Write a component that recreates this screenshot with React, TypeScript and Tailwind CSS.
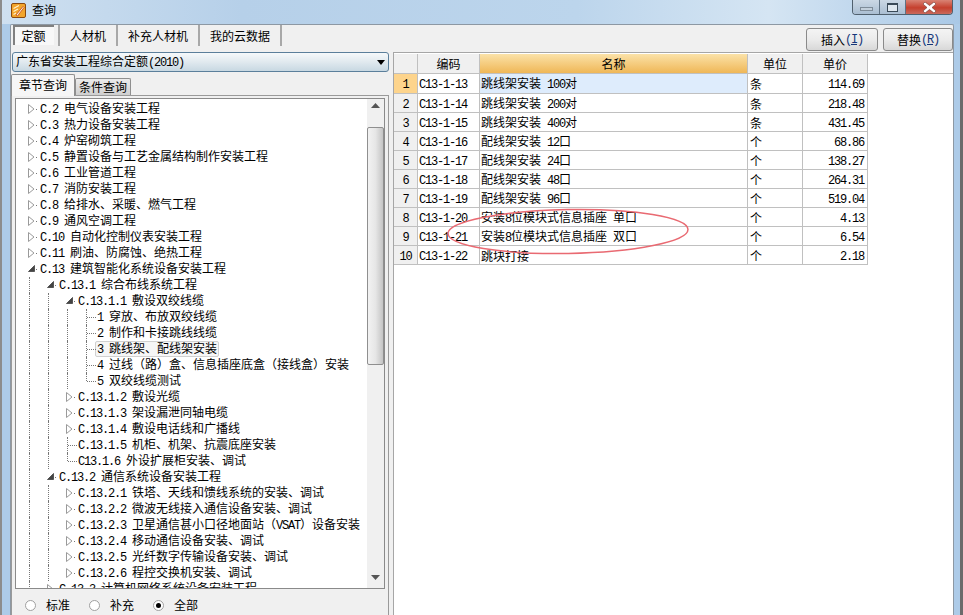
import { Fragment } from "react";

const latinClass = "font-['Liberation_Mono',monospace] text-[12px] tracking-[-1.2px]";

// Latin and digits sit on a 6px grid, CJK on a 12px grid
const Txt = ({ children }: { children: string }) => (
  <span className="whitespace-pre font-['Noto_Sans_CJK_SC',sans-serif] text-[12px] leading-4">
    {children.split(/([\x20-\x7e]+)/).map((part, i) =>
      /^[\x20-\x7e]+$/.test(part) ? (
        <span key={i} className={latinClass}>{part}</span>
      ) : (
        <Fragment key={i}>{part}</Fragment>
      )
    )}
  </span>
);

type TreeRow = {
  level: number;
  node?: "closed" | "open";
  line?: "full" | "half";
  text: string;
  selected?: boolean;
};

const treeRows: TreeRow[] = [
  { level: 0, node: "closed", text: "C.2 电气设备安装工程" },
  { level: 0, node: "closed", text: "C.3 热力设备安装工程" },
  { level: 0, node: "closed", text: "C.4 炉窑砌筑工程" },
  { level: 0, node: "closed", text: "C.5 静置设备与工艺金属结构制作安装工程" },
  { level: 0, node: "closed", text: "C.6 工业管道工程" },
  { level: 0, node: "closed", text: "C.7 消防安装工程" },
  { level: 0, node: "closed", text: "C.8 给排水、采暖、燃气工程" },
  { level: 0, node: "closed", text: "C.9 通风空调工程" },
  { level: 0, node: "closed", text: "C.10 自动化控制仪表安装工程" },
  { level: 0, node: "closed", text: "C.11 刷油、防腐蚀、绝热工程" },
  { level: 0, node: "open", text: "C.13 建筑智能化系统设备安装工程" },
  { level: 1, node: "open", text: "C.13.1 综合布线系统工程" },
  { level: 2, node: "open", text: "C.13.1.1 敷设双绞线缆" },
  { level: 3, line: "full", text: "1 穿放、布放双绞线缆" },
  { level: 3, line: "full", text: "2 制作和卡接跳线线缆" },
  { level: 3, line: "full", text: "3 跳线架、配线架安装", selected: true },
  { level: 3, line: "full", text: "4 过线（路）盒、信息插座底盒（接线盒）安装" },
  { level: 3, line: "half", text: "5 双绞线缆测试" },
  { level: 2, node: "closed", text: "C.13.1.2 敷设光缆" },
  { level: 2, node: "closed", text: "C.13.1.3 架设漏泄同轴电缆" },
  { level: 2, node: "closed", text: "C.13.1.4 敷设电话线和广播线" },
  { level: 2, line: "full", text: "C.13.1.5 机柜、机架、抗震底座安装" },
  { level: 2, line: "half", text: "C13.1.6 外设扩展柜安装、调试" },
  { level: 1, node: "open", text: "C.13.2 通信系统设备安装工程" },
  { level: 2, node: "closed", text: "C.13.2.1 铁塔、天线和馈线系统的安装、调试" },
  { level: 2, node: "closed", text: "C.13.2.2 微波无线接入通信设备安装、调试" },
  { level: 2, node: "closed", text: "C.13.2.3 卫星通信甚小口径地面站（VSAT）设备安装" },
  { level: 2, node: "closed", text: "C.13.2.4 移动通信设备安装、调试" },
  { level: 2, node: "closed", text: "C.13.2.5 光纤数字传输设备安装、调试" },
  { level: 2, node: "closed", text: "C.13.2.6 程控交换机安装、调试" },
  { level: 1, node: "closed", text: "C.13.3 计算机网络系统设备安装工程" },
];

const tableRows = [
  ["C13-1-13", "跳线架安装 100对", "条", "114.69"],
  ["C13-1-14", "跳线架安装 200对", "条", "218.48"],
  ["C13-1-15", "跳线架安装 400对", "条", "431.45"],
  ["C13-1-16", "配线架安装 12口", "个", "68.86"],
  ["C13-1-17", "配线架安装 24口", "个", "138.27"],
  ["C13-1-18", "配线架安装 48口", "个", "264.31"],
  ["C13-1-19", "配线架安装 96口", "个", "519.04"],
  ["C13-1-20", "安装8位模块式信息插座 单口", "个", "4.13"],
  ["C13-1-21", "安装8位模块式信息插座 双口", "个", "6.54"],
  ["C13-1-22", "跳块打接", "个", "2.18"],
];

const Guide = () => (
  <div className="h-full w-[19px] shrink-0 pl-[9px]">
    <div className="h-full border-l border-dotted border-[#777]" />
  </div>
);

const NodeCell = ({ row }: { row: TreeRow }) => (
  <div className="relative h-full w-5 shrink-0">
    {row.line && (
      <>
        <div className={`absolute left-[9px] top-0 border-l border-dotted border-[#777] ${row.line === "half" ? "h-2" : "h-full"}`} />
        <div className="absolute left-[10px] top-2 w-[9px] border-t border-dotted border-[#777]" />
      </>
    )}
    {row.node === "closed" && (
      <>
        <svg width="7" height="10" viewBox="0 0 7 10" className="absolute left-2 top-[3px]">
          <path d="M.5.5v9L6 5z" fill="#fff" stroke="#9a9a9a" />
        </svg>
        <div className="absolute left-4 top-2 h-px w-px bg-[#777]" />
      </>
    )}
    {row.node === "open" && (
      <>
        <svg width="7" height="7" viewBox="0 0 7 7" className="absolute left-2 top-1">
          <path d="M6.5.5v6H.5z" fill="#444" stroke="#555" />
        </svg>
        <div className="absolute left-4 top-2 h-px w-px bg-[#777]" />
      </>
    )}
  </div>
);

const Tree = () => (
  <div className="h-full min-w-0 flex-1 overflow-hidden bg-white pl-1 pt-[2px]">
    {treeRows.map((row, i) => (
      <div key={i} className="flex h-4 items-center text-black">
        {Array.from({ length: row.level }).map((_, g) => (
          <Guide key={g} />
        ))}
        <NodeCell row={row} />
        {row.selected ? (
          <div className="-ml-[2px] flex h-[16px] items-center rounded-[2px] border border-[#d0d0d0] bg-[#f6f6f6] pl-px pr-px">
            <Txt>{row.text}</Txt>
          </div>
        ) : (
          <Txt>{row.text}</Txt>
        )}
      </div>
    ))}
  </div>
);

const Scrollbar = () => (
  <div className="flex h-full w-[17px] shrink-0 flex-col bg-[#f0f0f0]">
    <div className="flex h-[28px] shrink-0 justify-center pt-1">
      <svg width="9" height="6" viewBox="0 0 9 6"><path d="M4.5 0 9 5H0z" fill="#555" /></svg>
    </div>
    <div className="h-[238px] shrink-0 rounded-[2px] border border-[#8f8f8f] bg-[linear-gradient(to_right,#f2f2f2,#e6e6e6_50%,#c4c4c4)]" />
    <div className="flex-1" />
    <div className="flex h-[17px] shrink-0 justify-center pt-1">
      <svg width="9" height="6" viewBox="0 0 9 6"><path d="M0 0h9L4.5 5z" fill="#555" /></svg>
    </div>
  </div>
);

const Radio = ({ label, on }: { label: string; on?: boolean }) => (
  <div className="flex w-[64px] items-center gap-[10px]">
    <div className="flex size-[11px] items-center justify-center rounded-full border border-[#a0a0a0] bg-white">
      {on && <div className="size-[5px] rounded-full bg-black" />}
    </div>
    <Txt>{label}</Txt>
  </div>
);

const Btn = ({ label, key2, w }: { label: string; key2: string; w: string }) => (
  <div className={`flex h-[23px] items-center justify-center rounded-[3px] border border-[#8a8a8a] bg-[linear-gradient(to_bottom,#f4f4f4,#ebebeb_50%,#d8d8d8)] text-black ${w}`}>
    <Txt>{label}</Txt>
    <span className="font-['Liberation_Mono',monospace] text-[12px] tracking-[-1.2px] text-[#16367a]">
      (<span className="underline">{key2}</span>)
    </span>
  </div>
);

const Tab = ({ label, w }: { label: string; w: string }) => (
  <div className={`flex h-[21px] items-center justify-center border-r-2 border-[#a8a8a8] text-black ${w}`}>
    <Txt>{label}</Txt>
  </div>
);

const headCell = "flex h-full items-center justify-center border-r border-[#c0c0c0] shrink-0";

const App = () => {
  return (
    <div className="flex h-[615px] w-[963px] flex-col overflow-hidden border-l-2 border-r-[3px] border-l-[#8c8c8c] border-r-[#6b6b6b] bg-[#adcbe8] text-black">
      {/* Title bar */}
      <div className="flex h-6 shrink-0 items-start bg-[linear-gradient(to_right,#cfe0f0,#b6d0e9_25%,#bcd5ec_60%,#d5e5f3_80%,#a9c8e6)]">
        <svg width="15" height="15" viewBox="0 0 15 15" className="ml-[9px] mt-[3px]">
          <rect x=".5" y=".5" width="14" height="14" rx="1.5" fill="#f2a52c" stroke="#8a4a10" />
          <path d="M2.500 5.500 8 2.500M2.500 8.500 7 6M2.500 11.500 5 10" stroke="#fff3d0" strokeWidth="1.200" />
          <path d="M5 12 12 3.500l1 1L6.500 13z" fill="#fff6d8" stroke="#c5471b" strokeWidth=".8" />
        </svg>
        <div className="ml-[6px] mt-px leading-4">
          <Txt>查询</Txt>
        </div>
        <div className="ml-auto mr-[7px] flex h-[15px] overflow-hidden rounded-b-[4px] border border-t-0 border-[#50606e]">
          <div className="flex w-[27px] items-end justify-center border-r border-[#5f7284] bg-[linear-gradient(to_bottom,#cbd8e5,#aabed2)] pb-[3px]">
            <div className="h-[4px] w-[13px] border border-[#7e8c99] bg-[#c3d0dc]" />
          </div>
          <div className="flex w-[26px] items-center justify-center border-r border-[#5f7284] bg-[linear-gradient(to_bottom,#cbd8e5,#aabed2)]">
            <div className="h-[9px] w-[11px] border border-t-2 border-[#3a4a58] bg-[#dfe8f0]" />
          </div>
          <div className="flex w-[46px] items-center justify-center bg-[linear-gradient(to_bottom,#d98374,#c5402e_55%,#c9695c)]">
            <svg width="13" height="11" viewBox="0 0 13 11"><path d="M2 0l4.500 3.500L11 0l2 2-4 3.500 4 3.500-2 2-4.500-3.500L2 11 0 9l4-3.500L0 2z" fill="#fff" stroke="#6b3a34" strokeWidth=".6" /></svg>
          </div>
        </div>
      </div>

      {/* Window body */}
      <div className="ml-2 mr-[6px] flex min-h-0 flex-1 flex-col rounded-t-[2px] border border-b-0 border-[#8d98a3] bg-[#f0f0f0]">
        {/* Tabs and action buttons */}
        <div className="flex h-[27px] shrink-0 pl-[2px]">
          <div className="flex h-[21px]">
            <div className="flex w-[47px] border-r-2 border-[#a8a8a8]">
              <div className="flex h-[20px] w-[41px] items-center justify-center border-l-2 border-t-2 border-[#808080] bg-[#f8f8f8] pr-[2px]">
                <Txt>定额</Txt>
              </div>
            </div>
            <Tab label="人材机" w="w-[58px]" />
            <Tab label="补充人材机" w="w-[82px]" />
            <Tab label="我的云数据" w="w-[82px]" />
          </div>
          <div className="ml-auto flex gap-[5px] pt-[3px]">
            <Btn label="插入" key2="I" w="w-[72px]" />
            <Btn label="替换" key2="R" w="w-[70px]" />
          </div>
        </div>

        <div className="flex min-h-0 flex-1">
          {/* Left column */}
          <div className="flex w-[378px] shrink-0 flex-col pl-px">
            <div className="flex h-[20px] shrink-0 items-center justify-between rounded-[3px] border border-[#5b7f9b] bg-[linear-gradient(to_bottom,#f6f9fb,#e3ebf0_45%,#c8d8e2)] pl-[3px] pr-[3px]">
              <Txt>广东省安装工程综合定额(2010)</Txt>
              <svg width="8" height="5" viewBox="0 0 8 5"><path d="M0 0h8L4 5z" fill="#000" /></svg>
            </div>
            <div className="mt-[2px] -ml-px flex h-[21px] shrink-0 items-end">
              <div className="relative z-10 -mb-px flex h-[22px] w-[64px] items-center justify-center rounded-t-[2px] border border-b-0 border-[#8f8f8f] bg-[#f6f6f6] pb-px">
                <Txt>章节查询</Txt>
              </div>
              <div className="flex h-[17px] w-[56px] items-center justify-center rounded-t-[2px] border border-b-0 border-[#8f8f8f] bg-[linear-gradient(to_bottom,#ececec,#cfcfcf)]">
                <Txt>条件查询</Txt>
              </div>
            </div>
            <div className="-ml-px flex min-h-0 flex-1 flex-col border border-b-0 border-[#9a9a9a] px-[3px] pt-[2px]">
              <div className="flex h-[491px] shrink-0 border border-[#8a8a8a]">
                <Tree />
                <Scrollbar />
              </div>
              <div className="flex flex-1 items-center pl-[10px] pt-[6px]">
                <Radio label="标准" />
                <Radio label="补充" />
                <Radio label="全部" on />
              </div>
            </div>
          </div>

          {/* Result table */}
          <div className="relative ml-1 flex min-w-0 flex-1 flex-col border-l border-t border-[#a6a6a6] bg-white pt-px">
            <div className="flex h-5 shrink-0 border-b border-[#c0c0c0]">
              <div className={`${headCell} w-[24px] bg-[#f0f0f0]`} />
              <div className={`${headCell} w-[62px] bg-[#f0f0f0]`}><Txt>编码</Txt></div>
              <div className={`${headCell} w-[268px] bg-[linear-gradient(to_bottom,#fbe2a8,#efb757)]`}><Txt>名称</Txt></div>
              <div className={`${headCell} w-[55px] bg-[#f0f0f0]`}><Txt>单位</Txt></div>
              <div className={`${headCell} w-[65px] bg-[#f0f0f0]`}><Txt>单价</Txt></div>
            </div>
            {tableRows.map((r, i) => (
              <div key={r[0]} className={`flex shrink-0 ${i === 0 ? "h-[20px]" : "h-[19px]"}`}>
                <div className={`${headCell} w-[24px] border-b pt-px ${i === 0 ? "bg-[#fdd48c]" : "bg-[#f0f0f0]"}`}>
                  <Txt>{String(i + 1)}</Txt>
                </div>
                <div className="flex h-full w-[62px] shrink-0 items-center border-b border-r border-[#c0c0c0] pl-px pt-px">
                  <Txt>{r[0]}</Txt>
                </div>
                <div className={`flex h-full w-[268px] shrink-0 items-center border-b border-r border-[#c0c0c0] pl-px pt-px ${i === 0 ? "bg-[#deecfc]" : ""}`}>
                  <Txt>{r[1]}</Txt>
                </div>
                <div className="flex h-full w-[55px] shrink-0 items-center border-b border-r border-[#c0c0c0] pl-[2px] pt-px">
                  <Txt>{r[2]}</Txt>
                </div>
                <div className="flex h-full w-[65px] shrink-0 items-center justify-end border-b border-r border-[#c0c0c0] pr-[3px] pt-px">
                  <Txt>{r[3]}</Txt>
                </div>
              </div>
            ))}
            {/* Hand-drawn annotation ellipse */}
            <svg width="250" height="50" viewBox="0 0 250 50" className="absolute left-[50px] top-[155px]">
              <ellipse cx="124" cy="23.500" rx="120" ry="22" fill="none" stroke="#e96a72" strokeWidth="1.500" transform="rotate(-1 124 23.500)" />
            </svg>
          </div>
        </div>
      </div>
    </div>
  );
};

export default App;
